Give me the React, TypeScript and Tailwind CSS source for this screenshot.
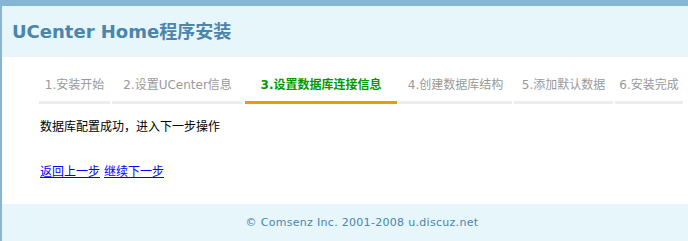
const steps = [
  { label: "1.安装开始", width: 71 },
  { label: "2.设置UCenter信息", width: 131 },
  { label: "3.设置数据库连接信息", width: 152, active: true },
  { label: "4.创建数据库结构", width: 113 },
  { label: "5.添加默认数据", width: 99 },
  { label: "6.安装完成", width: 68 },
];

export default function App() {
  return (
    <div className="w-[688px] h-[241px] overflow-hidden bg-white border-t-[6px] border-l-2 border-[#86b5d6] font-['DejaVu_Sans','Noto_Sans_CJK_SC',sans-serif] text-[12px]">
      {/* Header */}
      <div className="h-[51px] bg-[#e6f6fb] flex items-center pl-[10px]">
        <h1 className="text-[18px] font-bold text-[#4b84ac]">UCenter Home程序安装</h1>
      </div>

      {/* Step tabs */}
      <div className="mt-[18px] ml-[37px] flex gap-[2px]">
        {steps.map((s) => (
          <div
            key={s.label}
            className={
              s.active
                ? "h-[29px] leading-[20px] text-center border-b-[3px] border-[#f39800] text-[#009900] font-bold whitespace-nowrap"
                : "h-[29px] leading-[20px] text-center border-b-[3px] border-[#ededed] text-[#999999] whitespace-nowrap"
            }
            style={{ width: s.width }}
          >
            {s.label}
          </div>
        ))}
      </div>

      {/* Body */}
      <div className="pl-[38px]">
        <p className="mt-[13px] leading-[20px] text-black">数据库配置成功，进入下一步操作</p>
        <div className="mt-[25px] leading-[20px] flex gap-[4px]">
          <a href="#" className="text-[#0000ff] underline">返回上一步</a>
          <a href="#" className="text-[#0000ff] underline">继续下一步</a>
        </div>
      </div>

      {/* Footer */}
      <div className="mt-[22px] h-[40px] bg-[#e6f6fb] pt-[11px] pl-[34px] text-center text-[11px] leading-[16px] text-[#4b84ac] tracking-[0.3px]">
        © Comsenz Inc. 2001-2008 u.discuz.net
      </div>
    </div>
  );
}
